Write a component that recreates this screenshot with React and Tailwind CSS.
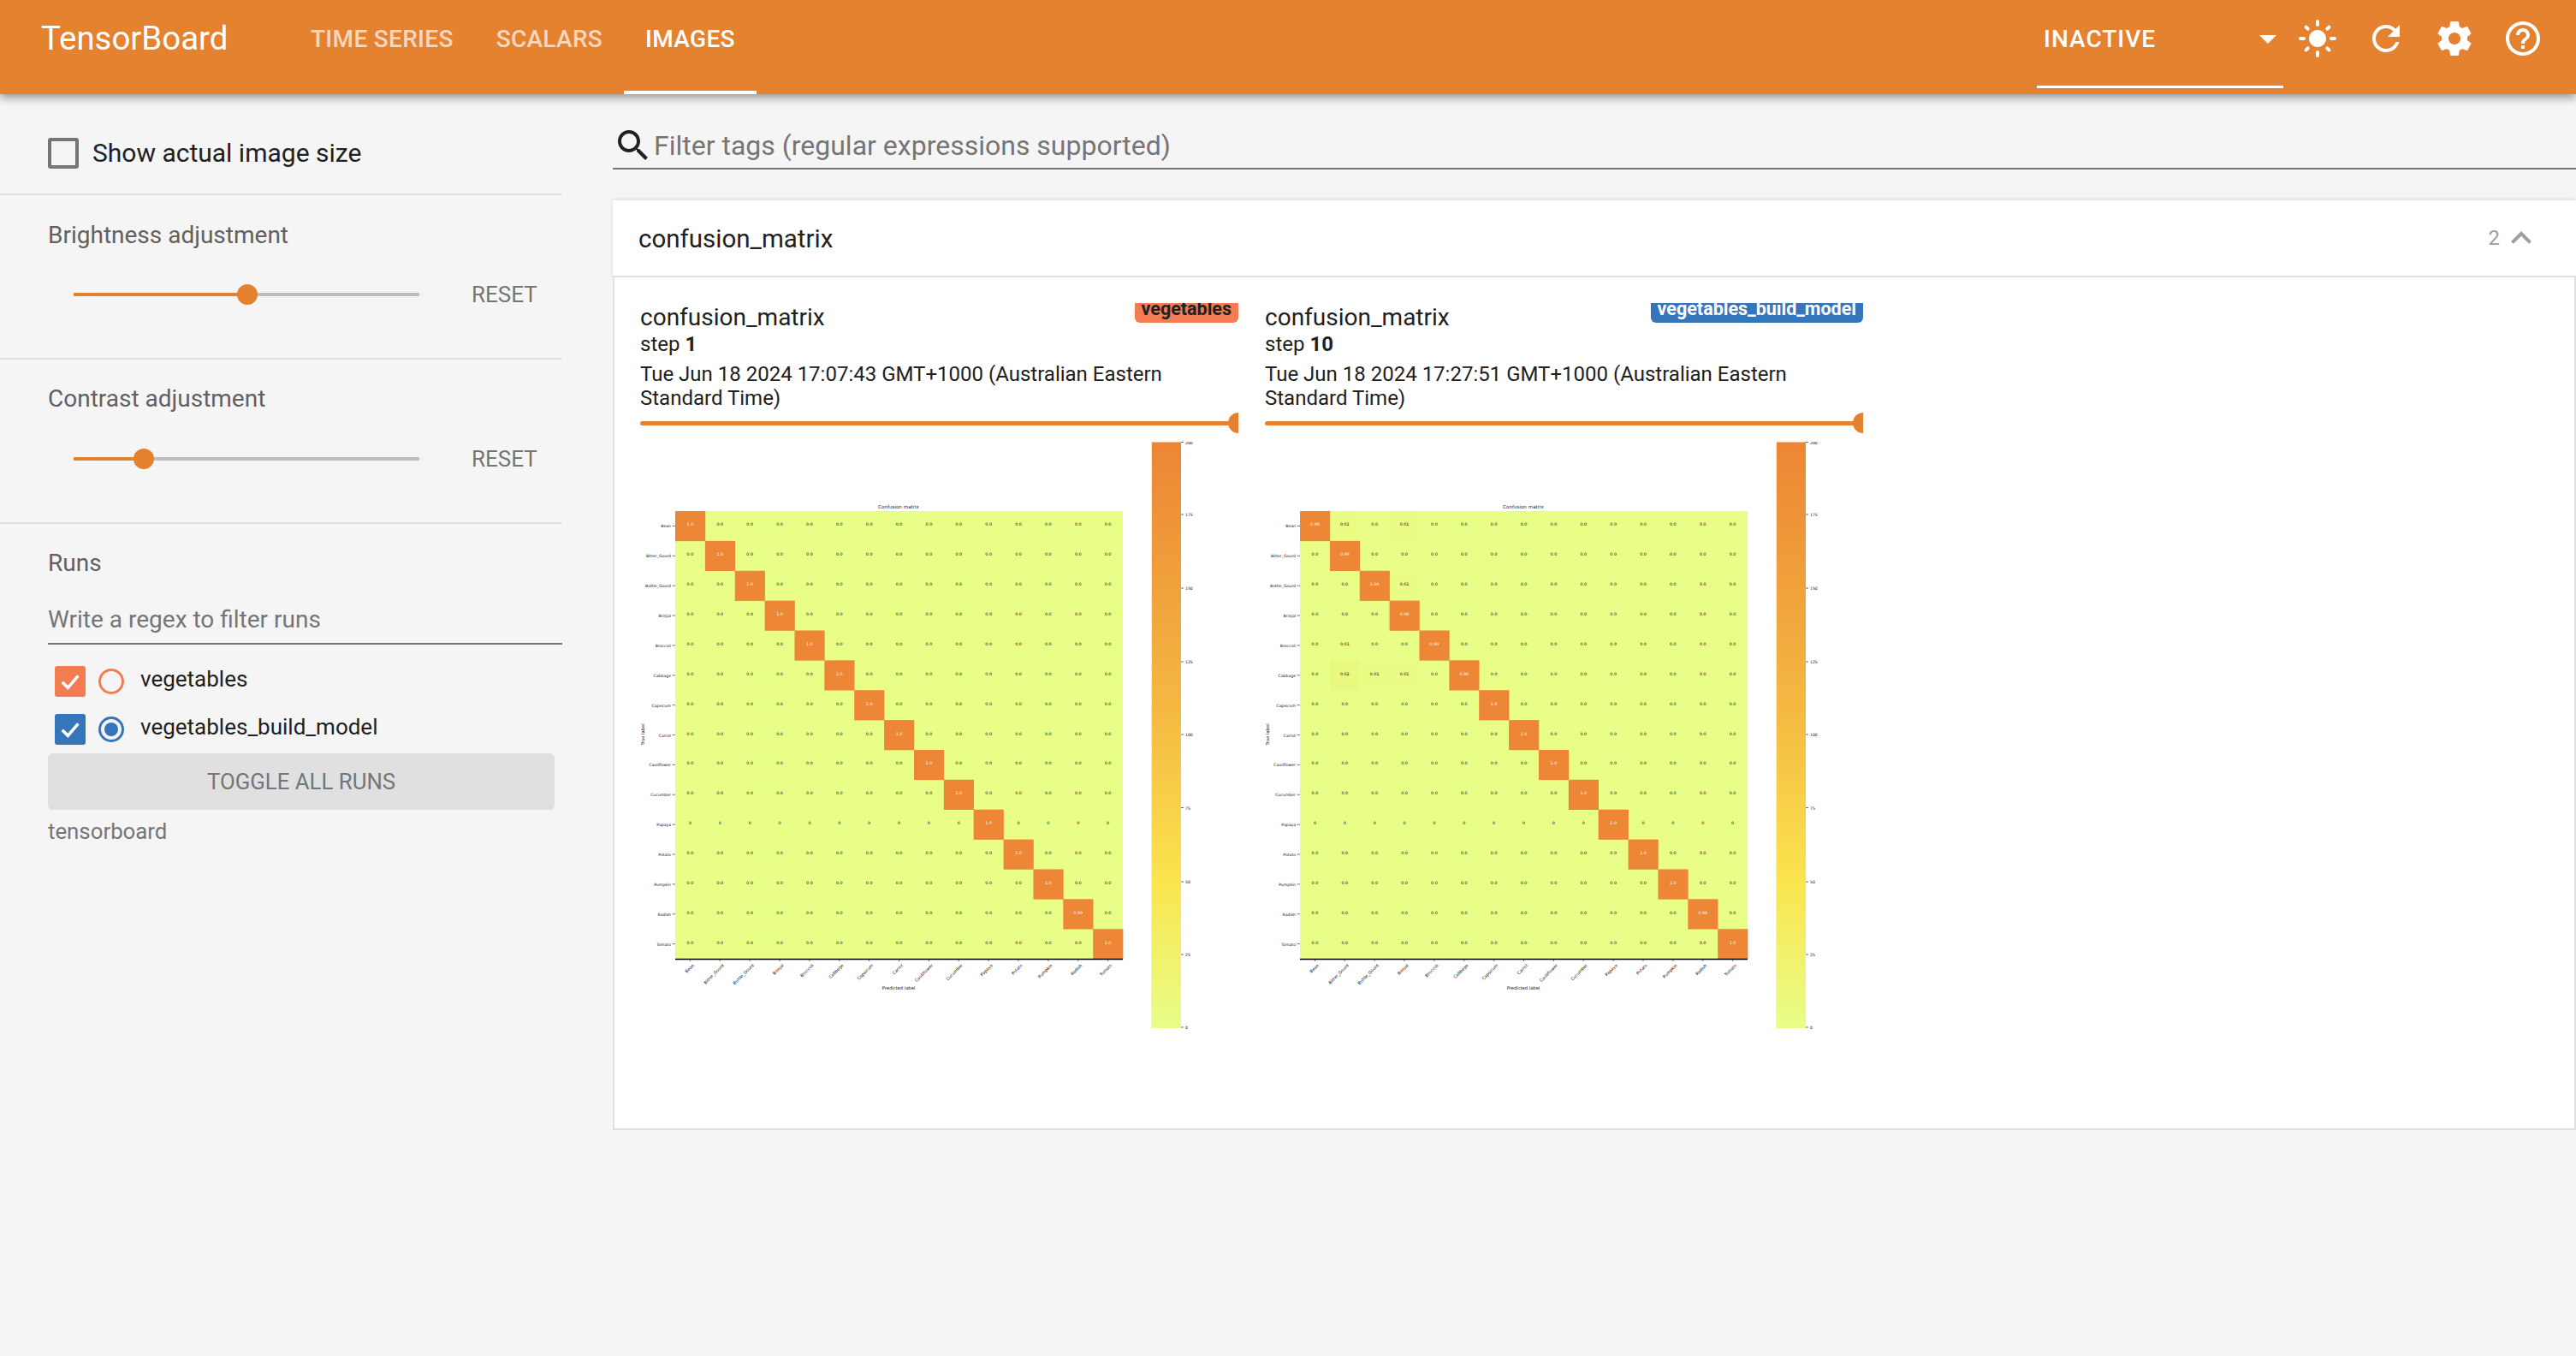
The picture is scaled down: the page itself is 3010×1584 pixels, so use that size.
import React from "react";

const labels = ["Bean","Bitter_Gourd","Bottle_Gourd","Brinjal","Broccoli","Cabbage","Capsicum","Carrot","Cauliflower","Cucumber","Papaya","Potato","Pumpkin","Radish","Tomato"];
const X0 = 789, Y0 = 597, C = 34.87;
const dejavu = "'DejaVu Sans', sans-serif";

function Matrix({ overrides, tints }) {
  const idx = labels.map((_, i) => i);
  return (
    <svg viewBox="748 516 699 700" className="w-[699px] h-[700px] mt-[10px] block" fontFamily={dejavu}>
      <text x={1050} y={593.5} fontSize="5.6" textAnchor="middle" fill="#222">Confusion matrix</text>
      <rect x={X0} y={Y0} width={C * 15} height={C * 15} fill="#e9fe87" />
      {(tints || []).map(([r, c, col]) => (
        <rect key={`t${r}-${c}`} x={X0 + c * C} y={Y0 + r * C} width={C} height={C} fill={col} />
      ))}
      {idx.map((i) => (
        <rect key={i} x={X0 + i * C} y={Y0 + i * C} width={C + 0.3} height={C + 0.3} fill="#ed8635" />
      ))}
      {idx.map((r) =>
        idx.map((c) => {
          const key = `${r}-${c}`;
          let v = r === c ? "1.0" : "0.0";
          if (r === 10 && c !== 10) v = "0";
          if (r === 13 && c === 13) v = "0.99";
          if (overrides && overrides[key]) v = overrides[key];
          return (
            <text key={key} x={X0 + (c + 0.5) * C} y={Y0 + (r + 0.5) * C} fontSize="4.8" textAnchor="middle" fill={r === c ? "#fff" : "#000"}>
              {v}
            </text>
          );
        })
      )}
      {labels.map((l, i) => (
        <g key={l}>
          <text x={784} y={Y0 + (i + 0.5) * C + 2} fontSize="4.6" textAnchor="end" fill="#111">{l}</text>
          <line x1={785.5} x2={789} y1={Y0 + (i + 0.5) * C} y2={Y0 + (i + 0.5) * C} stroke="#555" strokeWidth="0.8" />
          <line y1={1120} y2={1123} x1={X0 + (i + 0.5) * C} x2={X0 + (i + 0.5) * C} stroke="#555" strokeWidth="0.8" />
          <text transform={`translate(${X0 + (i + 0.5) * C + 5} 1128) rotate(-45)`} fontSize="4.9" textAnchor="end" fill="#111">{l}</text>
        </g>
      ))}
      <line x1={X0} x2={X0 + C * 15} y1={1120.5} y2={1120.5} stroke="#000" strokeWidth="1.6" />
      <text x={1050} y={1156} fontSize="5.2" textAnchor="middle" fill="#111">Predicted label</text>
      <text transform="translate(753 858) rotate(-90)" fontSize="5.2" textAnchor="middle" fill="#111">True label</text>
      <defs>
        <linearGradient id="cbar" x1="0" y1="0" x2="0" y2="1">
          <stop offset="0" stopColor="#ec8534" />
          <stop offset="0.45" stopColor="#f4b842" />
          <stop offset="0.75" stopColor="#fbe44e" />
          <stop offset="1" stopColor="#e8fe87" />
        </linearGradient>
      </defs>
      <rect x={1345} y={516.5} width={1.5} height={685} fill="#eeeeee" />
      <rect x={1346} y={516.5} width={34} height={684.5} fill="url(#cbar)" />
      {[["200",516.5],["175",601],["150",687],["125",773],["100",858],["75",943.5],["50",1030],["25",1115],["0",1200]].map(([t, y]) => (
        <g key={t}>
          <line x1={1380} x2={1383} y1={y} y2={y} stroke="#444" strokeWidth="0.8" />
          <text x={1385} y={y + 2} fontSize="4.6" fill="#111">{t}</text>
        </g>
      ))}
    </svg>
  );
}

function Icon({ d, className }) {
  return (
    <svg viewBox="0 0 24 24" className={className} fill="currentColor"><path d={d} /></svg>
  );
}

const SUN = "M12 7c-2.76 0-5 2.24-5 5s2.24 5 5 5 5-2.24 5-5-2.24-5-5-5zM2 13h2c.55 0 1-.45 1-1s-.45-1-1-1H2c-.55 0-1 .45-1 1s.45 1 1 1zm18 0h2c.55 0 1-.45 1-1s-.45-1-1-1h-2c-.55 0-1 .45-1 1s.45 1 1 1zM11 2v2c0 .55.45 1 1 1s1-.45 1-1V2c0-.55-.45-1-1-1s-1 .45-1 1zm0 18v2c0 .55.45 1 1 1s1-.45 1-1v-2c0-.55-.45-1-1-1s-1 .45-1 1zM5.99 4.58c-.39-.39-1.03-.39-1.41 0-.39.39-.39 1.03 0 1.41l1.06 1.06c.39.39 1.03.39 1.41 0s.39-1.03 0-1.41L5.99 4.58zm12.37 12.37c-.39-.39-1.03-.39-1.41 0-.39.39-.39 1.03 0 1.41l1.06 1.06c.39.39 1.03.39 1.41 0 .39-.39.39-1.03 0-1.41l-1.06-1.06zm1.06-10.96c.39-.39.39-1.03 0-1.41-.39-.39-1.03-.39-1.41 0l-1.06 1.06c-.39.39-.39 1.03 0 1.41s1.03.39 1.41 0l1.06-1.06zM7.05 18.36c.39-.39.39-1.03 0-1.41-.39-.39-1.03-.39-1.41 0l-1.06 1.06c-.39.39-.39 1.03 0 1.41s1.03.39 1.41 0l1.06-1.06z";
const REFRESH = "M17.65 6.35C16.2 4.9 14.21 4 12 4c-4.42 0-7.99 3.58-7.99 8s3.57 8 7.99 8c3.73 0 6.84-2.55 7.73-6h-2.08c-.82 2.33-3.04 4-5.65 4-3.31 0-6-2.69-6-6s2.69-6 6-6c1.66 0 3.14.69 4.22 1.78L13 11h7V4l-2.35 2.35z";
const GEAR = "M19.43 12.98c.04-.32.07-.64.07-.98s-.03-.66-.07-.98l2.11-1.65c.19-.15.24-.42.12-.64l-2-3.46c-.12-.22-.39-.3-.61-.22l-2.49 1c-.52-.4-1.08-.73-1.69-.98l-.38-2.65C14.46 2.18 14.25 2 14 2h-4c-.25 0-.46.18-.49.42l-.38 2.65c-.61.25-1.17.59-1.69.98l-2.49-1c-.23-.09-.49 0-.61.22l-2 3.46c-.13.22-.07.49.12.64l2.11 1.65c-.04.32-.07.65-.07.98s.03.66.07.98l-2.11 1.65c-.19.15-.24.42-.12.64l2 3.46c.12.22.39.3.61.22l2.49-1c.52.4 1.08.73 1.69.98l.38 2.65c.03.24.24.42.49.42h4c.25 0 .46-.18.49-.42l.38-2.65c.61-.25 1.17-.59 1.69-.98l2.49 1c.23.09.49 0 .61-.22l2-3.46c.12-.22.07-.49-.12-.64l-2.11-1.65zM12 15.5c-1.93 0-3.5-1.57-3.5-3.5s1.57-3.5 3.5-3.5 3.5 1.57 3.5 3.5-1.57 3.5-3.5 3.5z";
const HELP = "M11 18h2v-2h-2v2zm1-16C6.48 2 2 6.48 2 12s4.48 10 10 10 10-4.48 10-10S17.52 2 12 2zm0 18c-4.41 0-8-3.59-8-8s3.59-8 8-8 8 3.59 8 8-3.59 8-8 8zm0-14c-2.21 0-4 1.79-4 4h2c0-1.1.9-2 2-2s2 .9 2 2c0 2-3 1.75-3 5h2c0-2.25 3-2.5 3-5 0-2.21-1.79-4-4-4z";
const SEARCH = "M15.5 14h-.79l-.28-.27C15.41 12.59 16 11.11 16 9.5 16 5.91 13.09 3 9.5 3S3 5.91 3 9.5 5.91 16 9.5 16c1.61 0 3.09-.59 4.23-1.57l.27.28v.79l5 4.99L20.49 19l-4.99-5zm-6 0C7.01 14 5 11.99 5 9.5S7.01 5 9.5 5 14 7.01 14 9.5 11.99 14 9.5 14z";
const LESS = "M12 8l-6 6 1.41 1.41L12 10.83l4.59 4.58L18 14z";

function Slider({ fill }) {
  return (
    <div className="flex items-center h-[48px] pl-[30px]">
      <div className="relative w-[404px] h-[4px] bg-[#bdbdbd]">
        <div className={`h-full bg-[#e58230] ${fill === 203 ? "w-[203px]" : "w-[82px]"}`} />
        <div className={`absolute top-[-10px] w-[24px] h-[24px] rounded-full bg-[#e58230] ${fill === 203 ? "left-[191px]" : "left-[70px]"}`} />
      </div>
      <span className="ml-[61px] text-[26px] text-[#757575]">RESET</span>
    </div>
  );
}

function Run({ color, name, selected }) {
  const isBlue = color === "blue";
  return (
    <div className="flex items-center h-[56px] pl-[8px]">
      <div className={`w-[36px] h-[36px] rounded-[3px] flex items-center justify-center ${isBlue ? "bg-[#3575ba]" : "bg-[#f37c52]"}`}>
        <svg viewBox="0 0 24 24" className="w-[32px] h-[32px]" fill="none" stroke="#fff" strokeWidth="2.6"><path d="M5 12.5l5 5L19 7" /></svg>
      </div>
      <div className={`ml-[15px] w-[30px] h-[30px] rounded-full border-[3px] flex items-center justify-center ${isBlue ? "border-[#3575ba]" : "border-[#f37c52]"}`}>
        {selected && <div className="w-[16px] h-[16px] rounded-full bg-[#3575ba]" />}
      </div>
      <span className="ml-[19px] pb-[6px] text-[26px] text-[#212121]">{name}</span>
    </div>
  );
}

function ImageCard({ step, time, run, blue, overrides, tints }) {
  return (
    <div className="relative w-[699px] overflow-hidden">
      <div className={`absolute top-0 right-0 h-[23px] px-[8px] rounded-b-[6px] text-[21.5px] font-bold leading-[13px] overflow-hidden ${blue ? "bg-[#3575ba] text-white" : "bg-[#f37c52] text-[#212121]"}`}>{run}</div>
      <div className="pt-[2px] text-[28px] leading-[30px] text-[#212121]">confusion_matrix</div>
      <div className="text-[24px] leading-[32px] text-[#212121]">step <b className="font-bold">{step}</b></div>
      <div className="mt-[5px] text-[24px] leading-[28px] text-[#212121] w-[650px]">{time} GMT+1000 (Australian Eastern Standard Time)</div>
      <div className="relative mt-[3px] h-[24px] flex items-center">
        <div className="w-full h-[5px] rounded-full bg-[#e58230]" />
        <div className="absolute top-0 left-[687px] w-[24px] h-[24px] rounded-full bg-[#e58230]" />
      </div>
      <Matrix overrides={overrides} tints={tints} />
    </div>
  );
}

export default function App() {
  return (
    <div className="w-[3010px] h-[1584px] flex flex-col overflow-hidden bg-[#f5f5f5] font-['Roboto',sans-serif]">
      <header className="relative z-10 h-[110px] shrink-0 flex items-stretch bg-[#e58230] text-white shadow-[0_4px_10px_rgba(0,0,0,0.4)]">
        <div className="w-[338px] pl-[48px] pb-[20px] flex items-center text-[38.4px]">TensorBoard</div>
        <div className="px-[25px] pb-[18px] flex items-center text-[28px] font-medium text-white/70 tracking-[0.3px]">TIME SERIES</div>
        <div className="px-[25px] pb-[18px] flex items-center text-[28px] font-medium text-white/70 tracking-[0.3px]">SCALARS</div>
        <div className="px-[25px] pb-[14px] flex items-center text-[28px] font-medium border-b-4 border-white tracking-[0.3px]">IMAGES</div>
        <div className="ml-auto flex items-start pr-[38px]">
          <div className="w-[288px] h-[103px] border-b-[3px] border-white flex items-center justify-between pl-[8px] pr-[8px] pb-[8px] mr-[16px]">
            <span className="text-[28px] font-medium tracking-[1px]">INACTIVE</span>
            <svg viewBox="0 0 20 10" className="w-[20px] h-[10px]" fill="#fff"><path d="M0 0h20L10 10z" /></svg>
          </div>
          <div className="flex gap-[32px] mt-[21px]">
            <Icon d={SUN} className="w-[48px] h-[48px]" />
            <Icon d={REFRESH} className="w-[48px] h-[48px]" />
            <Icon d={GEAR} className="w-[48px] h-[48px]" />
            <Icon d={HELP} className="w-[48px] h-[48px]" />
          </div>
        </div>
      </header>

      <div className="flex flex-1 min-h-0">
        <aside className="w-[657px] shrink-0">
          <section className="h-[118px] border-b-2 border-[#e0e0e0] pl-[56px] pt-[22px] flex items-center">
            <div className="w-[36px] h-[36px] rounded-[3px] border-[4px] border-[#757575]" />
            <span className="ml-[16px] pb-[1px] text-[30px] text-[#212121]">Show actual image size</span>
          </section>
          <section className="h-[192px] border-b-2 border-[#e0e0e0] pl-[56px] pt-[31px]">
            <div className="text-[28px] leading-[32px] text-[#616161]">Brightness adjustment</div>
            <div className="mt-[29px]"><Slider fill={203} /></div>
          </section>
          <section className="h-[192px] border-b-2 border-[#e0e0e0] pl-[56px] pt-[30px]">
            <div className="text-[28px] leading-[32px] text-[#616161]">Contrast adjustment</div>
            <div className="mt-[30px]"><Slider fill={82} /></div>
          </section>
          <section className="pl-[56px] pt-[30px]">
            <div className="text-[28px] leading-[32px] text-[#616161]">Runs</div>
            <div className="mt-[23px] h-[56px] border-b-2 border-[#757575] flex items-center text-[28px] text-[#757575]">Write a regex to filter runs</div>
            <div className="mt-[15px]">
              <Run color="orange" name="vegetables" />
              <Run color="blue" name="vegetables_build_model" selected />
            </div>
            <div className="w-[592px] h-[66px] rounded-[6px] bg-[#e0e0e0] flex items-center justify-center text-[25.8px] text-[#757575]">TOGGLE ALL RUNS</div>
            <div className="mt-[9px] text-[25.8px] leading-[32px] text-[#757575]">tensorboard</div>
          </section>
        </aside>

        <main className="flex-1 pl-[59px] min-w-0">
          <div className="mt-[24px] h-[64px] border-b-2 border-[#757575] pt-[10px] flex items-center">
            <Icon d={SEARCH} className="w-[48px] h-[48px] text-[#212121]" />
            <span className="text-[32px] text-[#757575]">Filter tags (regular expressions supported)</span>
          </div>
          <div className="mt-[36px] h-[90px] bg-white border-b-2 border-[#e0e0e0] shadow-[0_-1px_4px_rgba(0,0,0,0.12)] flex items-center pl-[30px] pr-[40px]">
            <span className="text-[29.5px] pt-[2px] text-[#212121]">confusion_matrix</span>
            <span className="ml-auto text-[24px] text-[#9e9e9e]">2</span>
            <Icon d={LESS} className="w-[48px] h-[48px] text-[#9e9e9e] ml-[1px]" />
          </div>
          <div className="h-[996px] bg-white border-x-2 border-b-2 border-[#e0e0e0] flex gap-[31px] pl-[30px] pt-[30px]">
            <ImageCard step="1" time="Tue Jun 18 2024 17:07:43" run="vegetables" />
            <ImageCard
              step="10"
              time="Tue Jun 18 2024 17:27:51"
              run="vegetables_build_model"
              blue
              overrides={{ "0-0": "0.98", "0-1": "0.01", "0-3": "0.01", "1-1": "0.99", "2-2": "1.00", "2-3": "0.01", "3-3": "0.98", "4-1": "0.01", "4-4": "0.99", "5-1": "0.02", "5-2": "0.01", "5-3": "0.01", "5-5": "0.96" }}
              tints={[[0, 1, "#e9fc83"], [0, 3, "#e9fc83"], [5, 1, "#e9f97e"], [5, 2, "#e9fc83"], [5, 3, "#e9fc83"], [2, 3, "#e9fc83"]]}
            />
          </div>
        </main>
      </div>
    </div>
  );
}
